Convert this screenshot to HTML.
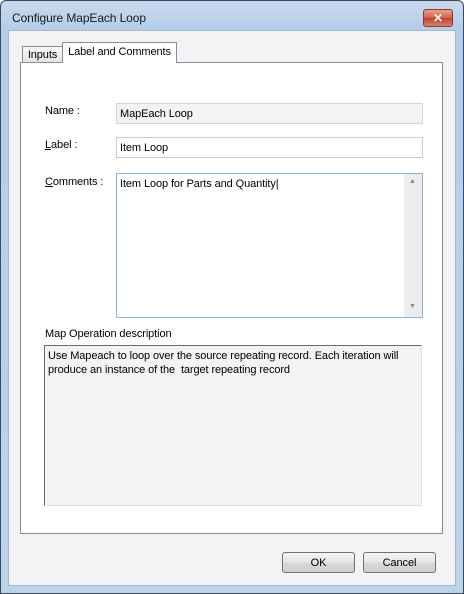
<!DOCTYPE html>
<html><head><style>
*{box-sizing:border-box;margin:0;padding:0}
body{width:464px;height:594px;overflow:hidden;background:#fff;font-family:"Liberation Sans",sans-serif;font-size:11px;letter-spacing:-0.1px;color:#000;position:relative}
.frame{position:absolute;left:0;top:0;width:464px;height:594px;border:1px solid #3a4a5a;border-radius:6px 6px 0 0;background:linear-gradient(#c7d9ee,#b5cde9 30px,#bcd3ec)}
.title{position:absolute;left:12px;top:11px;font-size:12px;color:#1a1a1a}
.close{position:absolute;left:423px;top:9px;width:30px;height:18px;border:1px solid #8a3a30;border-radius:3px;background:linear-gradient(#e8a090,#d4604c 50%,#c0402c 51%,#d88070);color:#fff;font-weight:bold;text-align:center;line-height:16px;font-size:12px}
.client{position:absolute;left:8px;top:30px;width:448px;height:556px;background:#f5f2f5;border:1px solid #a8b8c8}
.a{position:absolute;white-space:nowrap}
.panel{left:20px;top:62px;width:423px;height:472px;background:#fff;border:1px solid #898c95}
.tab{border:1px solid #898c95;border-bottom:none;text-align:center}
.box{border:1px solid #c8cccf;padding:4px 3px 2px;background:#fff}
.btn{width:73px;height:21px;border:1px solid #707070;border-radius:3px;background:linear-gradient(#f4f4f4,#e6e6e6 50%,#d8d8d8 51%,#d0d0d0);text-align:center;line-height:20px}
</style></head><body>
<div class="frame"></div>
<div class="title">Configure MapEach Loop</div>
<div class="close">✕</div>
<div class="client"></div>
<div class="a panel"></div>
<div class="a tab" style="left:22px;top:46px;width:41px;height:16px;background:linear-gradient(#fafafa,#e4e4e4);line-height:17px">Inputs</div>
<div class="a tab" style="left:62px;top:42px;width:115px;height:21px;background:#fff;line-height:18px">Label and Comments</div>
<div class="a" style="left:45px;top:105px">Name :</div>
<div class="a box" style="left:116px;top:103px;width:307px;height:21px;background:#f5f2f5;border-color:#d5d5d5">MapEach Loop</div>
<div class="a" style="left:45px;top:139px"><u>L</u>abel :</div>
<div class="a box" style="left:116px;top:137px;width:307px;height:21px">Item Loop</div>
<div class="a" style="left:45px;top:176px"><u>C</u>omments :</div>
<div class="a box" style="left:116px;top:173px;width:307px;height:145px;border-color:#8eb4d2">Item Loop for Parts and Quantity|</div>
<div class="a" style="left:404px;top:174px;width:18px;height:143px;background:#ececec"></div>
<div class="a" style="left:409px;top:178px;font-size:7px;color:#888">▲</div>
<div class="a" style="left:409px;top:303px;font-size:7px;color:#888">▼</div>
<div class="a" style="left:45px;top:328px">Map Operation description</div>
<div class="a box" style="left:44px;top:345px;width:378px;height:161px;background:#f5f2f5;border-left-color:#6b6b6b;border-top-color:#6b6b6b;border-right-color:#e0e0e0;border-bottom-color:#e0e0e0;line-height:14px;padding:3px 3px">Use Mapeach to loop over the source repeating record. Each iteration will<br>produce an instance of the&nbsp; target repeating record</div>
<div class="a btn" style="left:282px;top:552px">OK</div>
<div class="a btn" style="left:363px;top:552px">Cancel</div>
</body></html>
